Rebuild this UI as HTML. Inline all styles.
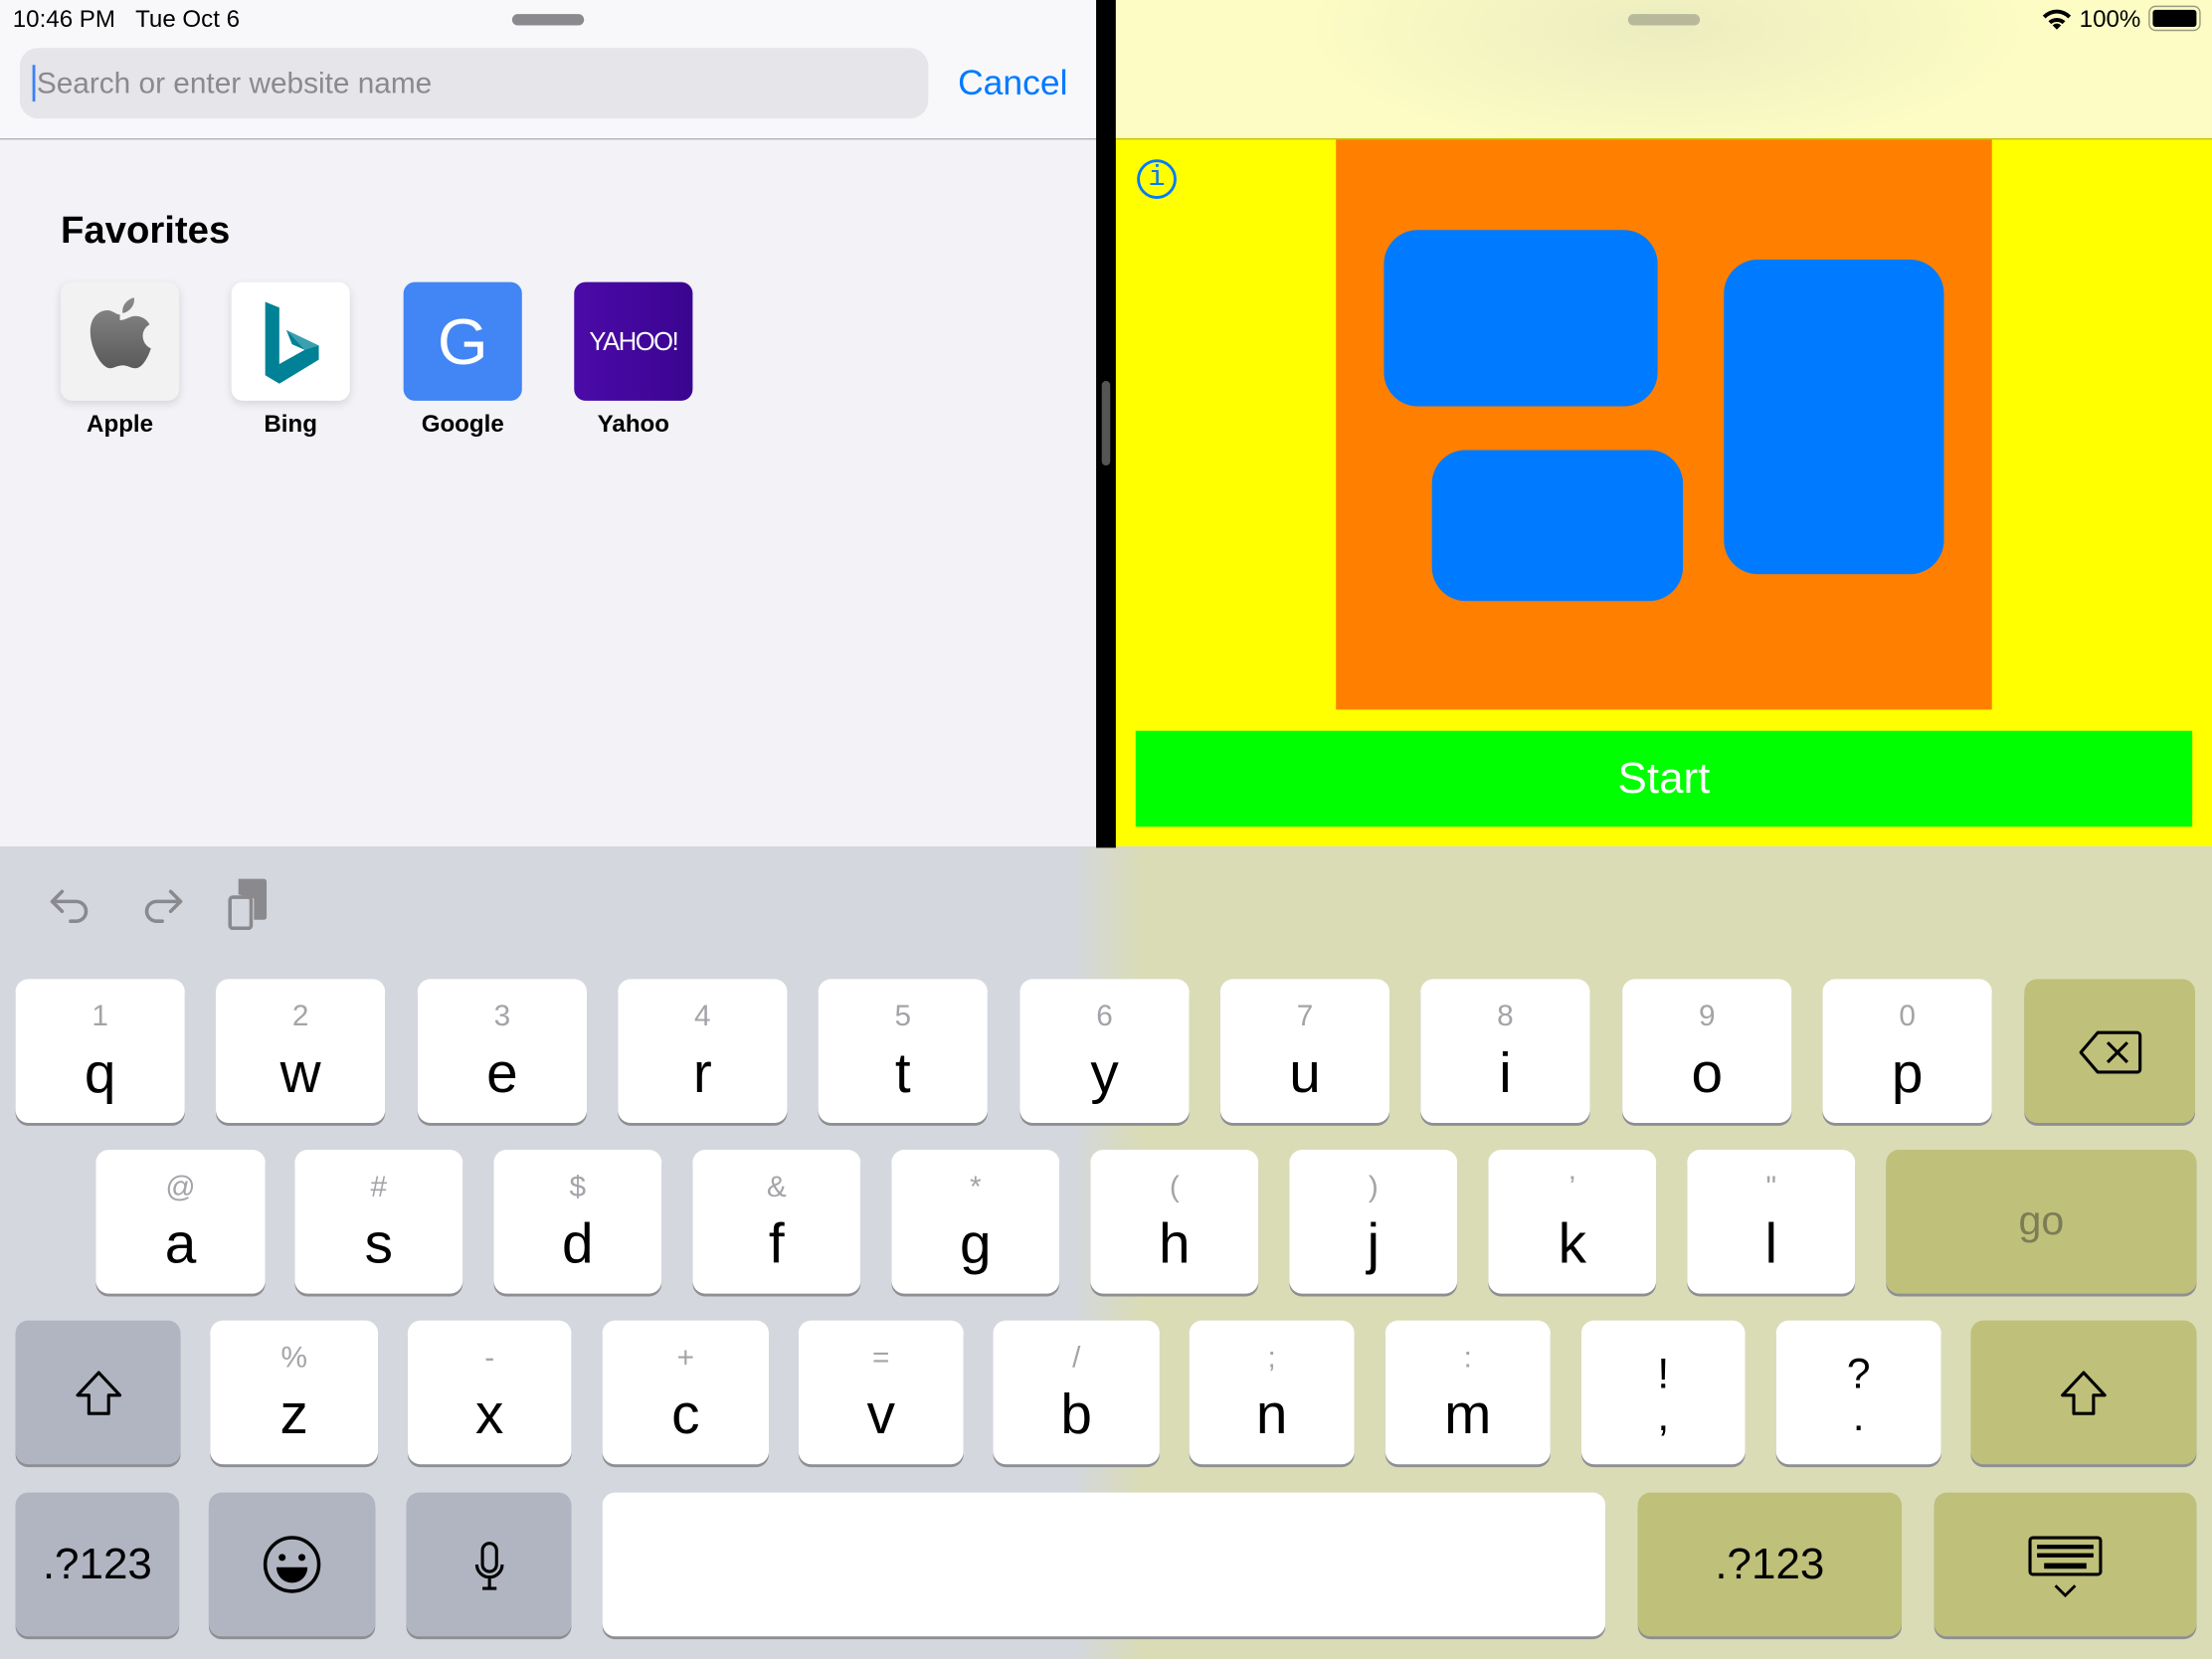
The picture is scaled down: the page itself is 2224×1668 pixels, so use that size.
<!DOCTYPE html>
<html><head><meta charset="utf-8"><style>
*{margin:0;padding:0;box-sizing:border-box}
html,body{width:2224px;height:1668px;overflow:hidden;background:#d4d7de}
#w{position:absolute;left:0;top:0;width:1568px;height:1176px;transform:scale(1.41837);transform-origin:0 0;font-family:"Liberation Sans",sans-serif}
.a{position:absolute}
.k{position:absolute;background:#fff;border-radius:9px;box-shadow:0 2px 0 #8e8f93;text-align:center;color:#000}
.k .h{position:absolute;left:0;right:0;top:15px;font-size:21px;color:#a3a4a8}
.k .l{position:absolute;left:0;right:0;top:45px;font-size:40px;line-height:44px}
.g{background:#b1b5c1}
.y{background:#bfc07a}
</style></head><body><div id="w">
<div class="a" style="left:0;top:0;width:777px;height:600px;background:#f2f2f7"></div>
<div class="a" style="left:0;top:0;width:777px;height:99px;background:#f8f8fa;border-bottom:1px solid #b4b4b8"></div>
<div class="a" style="left:9px;top:4px;font-size:17px">10:46 PM&nbsp;&nbsp;&nbsp;Tue Oct 6</div>
<div class="a" style="left:363px;top:10px;width:51px;height:8px;border-radius:4px;background:#8a8a8e"></div>
<div class="a" style="left:14px;top:34px;width:644px;height:50px;border-radius:13px;background:#e5e5ea"></div>
<div class="a" style="left:23px;top:46px;width:2px;height:26px;background:#3a82f7"></div>
<div class="a" style="left:26px;top:48px;font-size:21px;color:#8a8a8e">Search or enter website name</div>
<div class="a" style="left:679px;top:45px;font-size:25px;color:#007aff">Cancel</div>
<div class="a" style="left:43px;top:148px;font-size:27px;font-weight:bold">Favorites</div>
<div class="a" style="left:43px;top:200px;width:84px;height:84px;border-radius:8px;background:#f2f2f2;box-shadow:0 2px 6px rgba(0,0,0,.12)"><svg width="84" height="84" viewBox="0 0 84 84"><defs><linearGradient id="ag" x1="0" y1="0" x2="0" y2="1"><stop offset="0" stop-color="#8a8a8a"/><stop offset="1" stop-color="#5a5a5a"/></linearGradient></defs><path d="M52 11c1 5-3 10-8 11-1-5 3-10 8-11zM42 27c4 0 7-3 11-3 4 0 8 2 10 6-7 4-6 14 1 17-2 6-6 14-11 14-4 0-5-2-9-2s-6 2-9 2c-6 0-14-14-14-26 0-11 7-15 12-15 4 0 6 3 9 3z" fill="url(#ag)"/></svg></div>
<div class="a" style="left:164px;top:200px;width:84px;height:84px;border-radius:8px;background:#fff;box-shadow:0 2px 6px rgba(0,0,0,.12)"><svg width="84" height="84"><path d="M24 14l10 4v40l18-10-9-4-4-10 23 11v10l-28 17-10-6z" fill="#008196"/><path d="M39 34l23 11-10 3z" fill="#3aa0b0"/></svg></div>
<div class="a" style="left:286px;top:200px;width:84px;height:84px;border-radius:8px;background:#4285f4;color:#fff;font-size:46px;text-align:center;line-height:84px">G</div>
<div class="a" style="left:407px;top:200px;width:84px;height:84px;border-radius:8px;background:linear-gradient(90deg,#4b0aa8,#3a0590);color:#fff;font-size:18px;text-align:center;line-height:84px;letter-spacing:-1px">YAHOO!</div>
<div class="a" style="left:43px;top:291px;width:84px;text-align:center;font-size:17px;font-weight:bold">Apple</div>
<div class="a" style="left:164px;top:291px;width:84px;text-align:center;font-size:17px;font-weight:bold">Bing</div>
<div class="a" style="left:286px;top:291px;width:84px;text-align:center;font-size:17px;font-weight:bold">Google</div>
<div class="a" style="left:407px;top:291px;width:84px;text-align:center;font-size:17px;font-weight:bold">Yahoo</div>
<div class="a" style="left:777px;top:0;width:14px;height:601px;background:#000"></div>
<div class="a" style="left:781px;top:270px;width:6px;height:60px;border-radius:3px;background:#555"></div>
<div class="a" style="left:791px;top:0;width:777px;height:600px;background:#ffff00"></div>
<div class="a" style="left:791px;top:0;width:777px;height:99px;background:radial-gradient(ellipse 260px 90px at 390px 20px,#ecedc0,#fdfcc4);border-bottom:1px solid #c9c400"></div>
<div class="a" style="left:1154px;top:10px;width:51px;height:8px;border-radius:4px;background:#b8b89a"></div>
<svg class="a" style="left:1447px;top:6px" width="22" height="16" viewBox="0 0 22 16"><path d="M11 15l-3-3a4 4 0 0 1 6 0z M5 9a9 9 0 0 1 12 0l-2 2a6 6 0 0 0-8 0z M1 5a14 14 0 0 1 20 0l-2 2a11 11 0 0 0-16 0z" fill="#000"/></svg>
<div class="a" style="left:1474px;top:4px;font-size:17px">100%</div>
<div class="a" style="left:1523px;top:4px;width:37px;height:18px;border:1.5px solid #9a9a80;border-radius:5px;padding:2px"><div style="width:100%;height:100%;background:#000;border-radius:2px"></div></div>
<div class="a" style="left:806px;top:113px;width:28px;height:28px;border:2px solid #007aff;border-radius:50%;color:#007aff;font-family:'Liberation Mono',monospace;font-size:20px;text-align:center;line-height:24px">i</div>
<div class="a" style="left:947px;top:99px;width:465px;height:404px;background:#ff8000"></div>
<div class="a" style="left:981px;top:163px;width:194px;height:125px;border-radius:24px;background:#007aff"></div>
<div class="a" style="left:1222px;top:184px;width:156px;height:223px;border-radius:24px;background:#007aff"></div>
<div class="a" style="left:1015px;top:319px;width:178px;height:107px;border-radius:24px;background:#007aff"></div>
<div class="a" style="left:805px;top:518px;width:749px;height:68px;background:#00ff00;color:#fff;font-size:31px;text-align:center;line-height:68px">Start</div>
<div class="a" style="left:0;top:601px;width:1568px;height:575px;background:linear-gradient(90deg,#d4d7de 0,#d4d7de 760px,#dadcb6 810px,#dadcb6 100%)"></div>
<svg class="a" style="left:30px;top:620px" width="180" height="42" viewBox="0 0 180 42"><g fill="none" stroke="#8a8a8e" stroke-width="2.5" stroke-linecap="round" stroke-linejoin="round"><path d="M14 12l-7 7 7 7M7 19h17a7 7 0 0 1 0 14h-4"/><path d="M91 12l7 7-7 7M98 19h-17a7 7 0 0 0 0 14h4"/><rect x="133" y="16" width="15" height="22" rx="2"/></g><path d="M139 3h18a2 2 0 0 1 2 2v25a2 2 0 0 1-2 2h-7V17l-11-3z" fill="#8a8a8e"/></svg>
<div class="k" style="left:11px;top:694px;width:120px;height:102px"><div class="h">1</div><div class="l">q</div></div>
<div class="k" style="left:153px;top:694px;width:120px;height:102px"><div class="h">2</div><div class="l">w</div></div>
<div class="k" style="left:296px;top:694px;width:120px;height:102px"><div class="h">3</div><div class="l">e</div></div>
<div class="k" style="left:438px;top:694px;width:120px;height:102px"><div class="h">4</div><div class="l">r</div></div>
<div class="k" style="left:580px;top:694px;width:120px;height:102px"><div class="h">5</div><div class="l">t</div></div>
<div class="k" style="left:723px;top:694px;width:120px;height:102px"><div class="h">6</div><div class="l">y</div></div>
<div class="k" style="left:865px;top:694px;width:120px;height:102px"><div class="h">7</div><div class="l">u</div></div>
<div class="k" style="left:1007px;top:694px;width:120px;height:102px"><div class="h">8</div><div class="l">i</div></div>
<div class="k" style="left:1150px;top:694px;width:120px;height:102px"><div class="h">9</div><div class="l">o</div></div>
<div class="k" style="left:1292px;top:694px;width:120px;height:102px"><div class="h">0</div><div class="l">p</div></div>
<div class="k y" style="left:1435px;top:694px;width:121px;height:102px"><svg style="margin-top:36px" width="46" height="32" viewBox="0 0 46 32"><path d="M14 2h28a2 2 0 0 1 2 2v24a2 2 0 0 1-2 2H14L2 16z" fill="none" stroke="#000" stroke-width="2.2" stroke-linejoin="round"/><path d="M21 9l14 14M35 9L21 23" stroke="#000" stroke-width="2.2"/></svg></div>
<div class="k" style="left:68px;top:815px;width:120px;height:102px"><div class="h">@</div><div class="l">a</div></div>
<div class="k" style="left:209px;top:815px;width:119px;height:102px"><div class="h">#</div><div class="l">s</div></div>
<div class="k" style="left:350px;top:815px;width:119px;height:102px"><div class="h">$</div><div class="l">d</div></div>
<div class="k" style="left:491px;top:815px;width:119px;height:102px"><div class="h">&amp;</div><div class="l">f</div></div>
<div class="k" style="left:632px;top:815px;width:119px;height:102px"><div class="h">*</div><div class="l">g</div></div>
<div class="k" style="left:773px;top:815px;width:119px;height:102px"><div class="h">(</div><div class="l">h</div></div>
<div class="k" style="left:914px;top:815px;width:119px;height:102px"><div class="h">)</div><div class="l">j</div></div>
<div class="k" style="left:1055px;top:815px;width:119px;height:102px"><div class="h">’</div><div class="l">k</div></div>
<div class="k" style="left:1196px;top:815px;width:119px;height:102px"><div class="h">"</div><div class="l">l</div></div>
<div class="k y" style="left:1337px;top:815px;width:220px;height:102px;color:#7c7d55;font-size:29px;line-height:102px">go</div>
<div class="k g" style="left:11px;top:936px;width:117px;height:102px"><svg style="margin-top:35px" width="36" height="34" viewBox="0 0 36 34"><path d="M18 2L3 18h8v13h14V18h8z" fill="none" stroke="#000" stroke-width="2.2" stroke-linejoin="round"/></svg></div>
<div class="k" style="left:149px;top:936px;width:119px;height:102px"><div class="h">%</div><div class="l">z</div></div>
<div class="k" style="left:289px;top:936px;width:116px;height:102px"><div class="h">-</div><div class="l">x</div></div>
<div class="k" style="left:427px;top:936px;width:118px;height:102px"><div class="h">+</div><div class="l">c</div></div>
<div class="k" style="left:566px;top:936px;width:117px;height:102px"><div class="h">=</div><div class="l">v</div></div>
<div class="k" style="left:704px;top:936px;width:118px;height:102px"><div class="h">/</div><div class="l">b</div></div>
<div class="k" style="left:843px;top:936px;width:117px;height:102px"><div class="h">;</div><div class="l">n</div></div>
<div class="k" style="left:982px;top:936px;width:117px;height:102px"><div class="h">:</div><div class="l">m</div></div>
<div class="k" style="left:1121px;top:936px;width:116px;height:102px"><div style="position:absolute;left:0;right:0;top:24px;font-size:30px;line-height:30px">!<br>,</div></div>
<div class="k" style="left:1259px;top:936px;width:117px;height:102px"><div style="position:absolute;left:0;right:0;top:24px;font-size:30px;line-height:30px">?<br>.</div></div>
<div class="k y" style="left:1397px;top:936px;width:160px;height:102px"><svg style="margin-top:35px" width="36" height="34" viewBox="0 0 36 34"><path d="M18 2L3 18h8v13h14V18h8z" fill="none" stroke="#000" stroke-width="2.2" stroke-linejoin="round"/></svg></div>
<div class="k g" style="left:11px;top:1058px;width:116px;height:102px;font-size:31px;line-height:102px">.?123</div>
<div class="k g" style="left:148px;top:1058px;width:118px;height:102px"><svg style="margin-top:30px" width="42" height="42" viewBox="0 0 42 42"><circle cx="21" cy="21" r="19" fill="none" stroke="#000" stroke-width="2.5"/><circle cx="14" cy="16" r="2.5"/><circle cx="28" cy="16" r="2.5"/><path d="M10 23h22a11 11 0 0 1-22 0z"/></svg></div>
<div class="k g" style="left:288px;top:1058px;width:117px;height:102px"><svg style="margin-top:34px" width="24" height="36" viewBox="0 0 24 36"><rect x="7" y="2" width="10" height="20" rx="5" fill="none" stroke="#000" stroke-width="2.2"/><path d="M3 17a9 9 0 0 0 18 0M12 26v7M7 34h10" fill="none" stroke="#000" stroke-width="2.2"/></svg></div>
<div class="k" style="left:427px;top:1058px;width:711px;height:102px"></div>
<div class="k y" style="left:1161px;top:1058px;width:187px;height:102px;font-size:31px;line-height:102px">.?123</div>
<div class="k y" style="left:1371px;top:1058px;width:186px;height:102px"><svg style="margin-top:30px" width="54" height="46" viewBox="0 0 54 46"><rect x="2" y="2" width="50" height="26" rx="2" fill="none" stroke="#000" stroke-width="2.2"/><g fill="#000"><rect x="7" y="7" width="40" height="3"/><rect x="7" y="13" width="40" height="3"/><rect x="12" y="20" width="30" height="4"/></g><path d="M20 36l7 7 7-7" fill="none" stroke="#000" stroke-width="2"/></svg></div>
</div></body></html>
